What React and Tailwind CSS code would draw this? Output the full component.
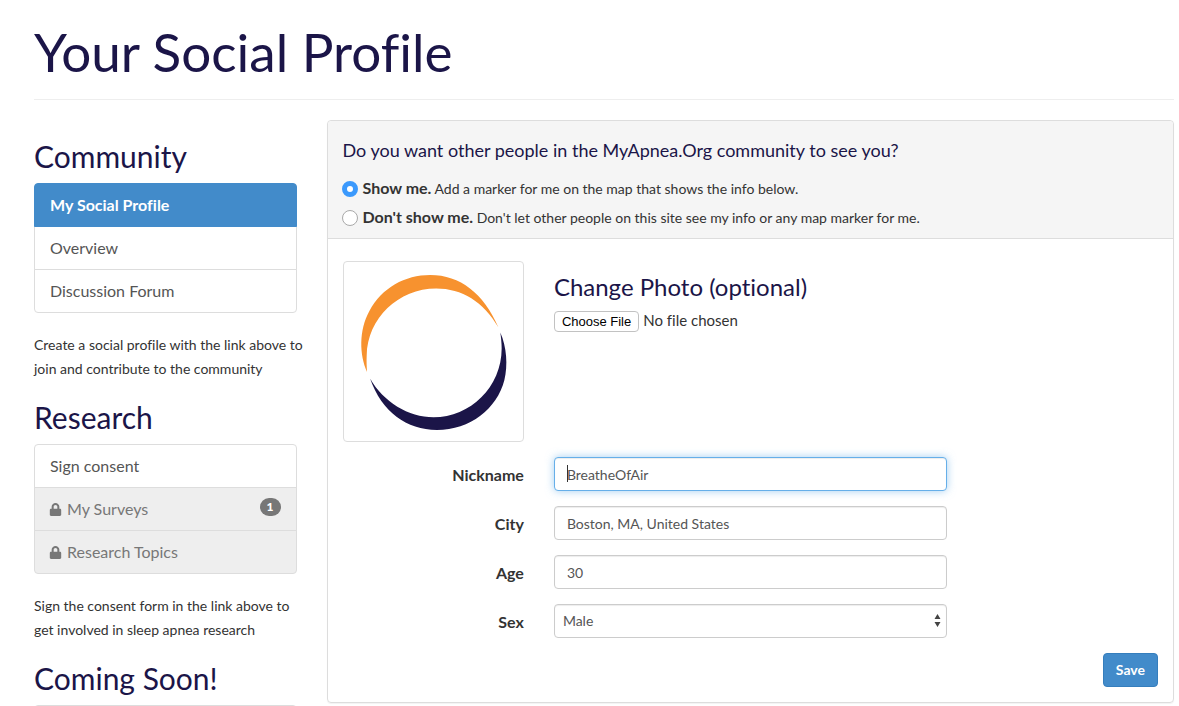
import { FaLock } from "react-icons/fa";

const headingClass = "text-[30px] leading-[33px] text-[#1b1548]";
const itemClass =
  "-mt-px flex items-center border px-[15px] py-[10px] text-[16px] leading-[22px] first:mt-0 first:rounded-t last:rounded-b";
const plainItem = "border-[#dddddd] bg-white text-[#555555]";
const lockedItem = "border-[#dddddd] bg-[#eeeeee] text-[#777777]";
const activeItem = "relative border-[#428bca] bg-[#428bca] font-bold text-white";
const fieldClass =
  "h-[34px] w-full rounded border bg-white px-3 text-[14px] leading-5 text-[#555555] outline-none";
const labelClass = "col-span-3 pt-[7px] text-right text-[16px] leading-[22px] font-bold text-[#333333]";

function SideSection({ title, note, children }) {
  return (
    <section>
      <h2 className={headingClass}>{title}</h2>
      <div className="mt-[10px]">{children}</div>
      {note && (
        <p className="mt-5 text-[14px] leading-[24px] whitespace-pre text-[#333333]">{note}</p>
      )}
    </section>
  );
}

function Sidebar() {
  return (
    <nav className="col-span-3 flex flex-col gap-5 pt-5">
      <SideSection
        title="Community"
        note={"Create a social profile with the link above to\njoin and contribute to the community"}
      >
        <a href="#profile" className={`${itemClass} ${activeItem}`}>My Social Profile</a>
        <a href="#overview" className={`${itemClass} ${plainItem}`}>Overview</a>
        <a href="#forum" className={`${itemClass} ${plainItem}`}>Discussion Forum</a>
      </SideSection>
      <SideSection
        title="Research"
        note={"Sign the consent form in the link above to\nget involved in sleep apnea research"}
      >
        <a href="#consent" className={`${itemClass} ${plainItem}`}>Sign consent</a>
        <a href="#surveys" className={`${itemClass} ${lockedItem}`}>
          <FaLock className="mr-[5px] -ml-px size-[13px]" />
          My Surveys
          <span className="mb-1 ml-auto rounded-full bg-[#777777] px-[7px] py-[3px] text-[12px] leading-3 font-black text-white">
            1
          </span>
        </a>
        <a href="#topics" className={`${itemClass} ${lockedItem}`}>
          <FaLock className="mr-[5px] -ml-px size-[13px]" />
          Research Topics
        </a>
      </SideSection>
      <SideSection title="Coming Soon!">
        <div className="h-11 rounded border border-[#dddddd]" />
      </SideSection>
    </nav>
  );
}

function VisibilityOption({ id, title, text, defaultChecked }) {
  return (
    <div className="flex h-[29px] items-center gap-[5px]">
      <input
        id={id}
        type="radio"
        name="visibility"
        defaultChecked={defaultChecked}
        className="-ml-px size-4 shrink-0 appearance-none rounded-full border border-[#a9a9a9] bg-white checked:border-[5px] checked:border-[#3b99fc]"
      />
      <label htmlFor={id} className="text-[14px] leading-[22px] text-[#333333]">
        <strong className="text-[16px] font-bold">{title}</strong> {text}
      </label>
    </div>
  );
}

function RingLogo() {
  return (
    <svg viewBox="12 21 537 537" className="block w-full" role="img" aria-label="Profile photo">
      <path
        fill="#f7922f"
        d="M81 350C58 300 56 225 88 168C125 98 195 60 270 60C360 60 430 115 474 216C430 140 365 100 288 100C175 100 82 190 80 300C79 320 80 335 81 350Z"
      />
      <path
        fill="#1b1548"
        d="M480 232C499 275 503 330 492 375C470 460 390 524 290 524C200 524 125 470 90 370C130 440 205 486 280 486C390 486 484 395 484 280C484 262 482 247 480 232Z"
      />
    </svg>
  );
}

function TextRow({ id, label, value, active }) {
  return (
    <div className="grid grid-cols-12 gap-x-[30px]">
      <label htmlFor={id} className={labelClass}>{label}</label>
      <div className="relative col-span-6">
        <input
          id={id}
          type="text"
          defaultValue={value}
          className={`${fieldClass} ${
            active
              ? "border-[#66afe9] shadow-[inset_0_1px_1px_rgba(0,0,0,0.075),0_0_8px_rgba(102,175,233,0.6)]"
              : "border-[#cccccc] shadow-[inset_0_1px_1px_rgba(0,0,0,0.075)]"
          }`}
        />
        {active && <span className="absolute top-2 left-[13px] h-[17px] w-px bg-[#333333]" />}
      </div>
    </div>
  );
}

export default function App() {
  return (
    <div className="h-screen overflow-hidden bg-white pr-[5px] pl-[34px] font-['Lato',sans-serif] [font-variant-ligatures:none]">
      <header className="border-b border-[#eeeeee] pt-[23px] pb-[19px]">
        <h1 className="text-[53px] leading-[57px] text-[#1b1548]">Your Social Profile</h1>
      </header>
      <div className="mt-5 grid grid-cols-12 items-start gap-x-[30px]">
        <Sidebar />
        <main className="col-span-9 rounded border border-[#dddddd] shadow-[0_1px_1px_rgba(0,0,0,0.05)]">
          <form>
            <fieldset className="rounded-t border-b border-[#dddddd] bg-[#f5f5f5] px-[15px] pt-[19px] pb-[6px]">
              <legend className="float-left mb-[13px] w-full text-[18px] leading-[21px] text-[#1b1548]">
                Do you want other people in the MyApnea.Org community to see you?
              </legend>
              <div className="clear-both">
                <VisibilityOption
                  id="show"
                  title="Show me."
                  text="Add a marker for me on the map that shows the info below."
                  defaultChecked
                />
                <VisibilityOption
                  id="hide"
                  title="Don't show me."
                  text="Don't let other people on this site see my info or any map marker for me."
                />
              </div>
            </fieldset>
            <div className="flex flex-col gap-[15px] px-[15px] pt-[22px] pb-[15px]">
              <div className="grid grid-cols-12 gap-x-[30px]">
                <div className="col-span-3 overflow-hidden rounded border border-[#dddddd]">
                  <RingLogo />
                </div>
                <div className="col-span-9 pt-3">
                  <label htmlFor="photo" className="block text-[24px] leading-[28px] text-[#1b1548]">
                    Change Photo (optional)
                  </label>
                  <input
                    id="photo"
                    type="file"
                    className="mt-2 block w-full text-[15px] leading-[22px] text-[#333333] file:mr-1 file:h-[21px] file:rounded file:border file:border-solid file:border-[#c2c2c2] file:bg-white file:px-[7px] file:font-['Liberation_Sans',sans-serif] file:text-[13px] file:leading-[19px] file:text-black"
                  />
                </div>
              </div>
              <TextRow id="nickname" label="Nickname" value="BreatheOfAir" active />
              <TextRow id="city" label="City" value="Boston, MA, United States" />
              <TextRow id="age" label="Age" value="30" />
              <div className="grid grid-cols-12 gap-x-[30px]">
                <label htmlFor="sex" className={labelClass}>Sex</label>
                <div className="relative col-span-6">
                  <select
                    id="sex"
                    defaultValue="Male"
                    className="h-[34px] w-full appearance-none rounded border border-[#cccccc] bg-white px-2 text-[14px] leading-5 text-[#555555] shadow-[inset_0_1px_1px_rgba(0,0,0,0.075)]"
                  >
                    <option>Male</option>
                    <option>Female</option>
                  </select>
                  <svg
                    viewBox="0 0 7 13"
                    className="pointer-events-none absolute top-[10px] right-[6px] h-[13px] w-[7px] fill-[#444444]"
                    aria-hidden="true"
                  >
                    <path d="M3.5 0L6.5 5H.5ZM.5 8H6.5L3.5 13Z" />
                  </svg>
                </div>
              </div>
              <button
                type="button"
                className="h-[34px] self-end rounded border border-[#357ebd] bg-[#428bca] px-3 text-[14px] leading-5 font-bold text-white"
              >
                Save
              </button>
            </div>
          </form>
        </main>
      </div>
    </div>
  );
}
